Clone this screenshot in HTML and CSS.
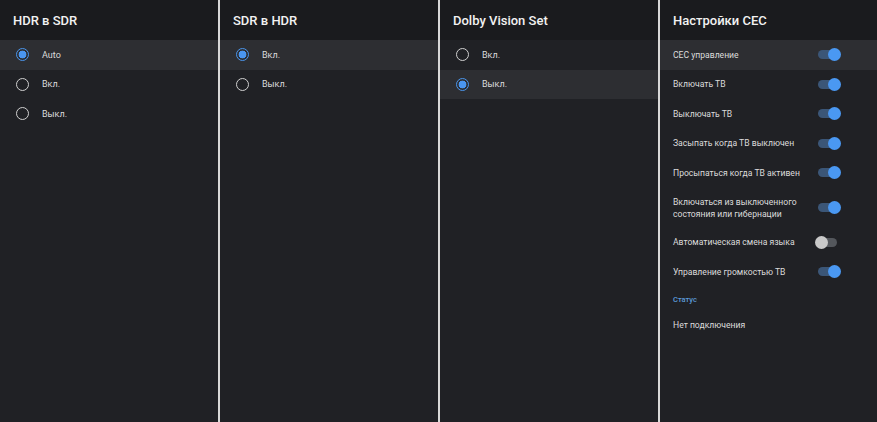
FILE: index.html
```html
<!DOCTYPE html>
<html lang="ru">
<head>
<meta charset="utf-8">
<link rel="stylesheet" href="styles.css">
</head>
<body>
<div class="screen">
  <section class="panel">
    <header class="title">HDR в SDR</header>
    <ul class="list">
      <li class="row active"><span class="radio on"></span><span class="label">Auto</span></li>
      <li class="row"><span class="radio"></span><span class="label">Вкл.</span></li>
      <li class="row"><span class="radio"></span><span class="label">Выкл.</span></li>
    </ul>
  </section>
  <section class="panel">
    <header class="title">SDR в HDR</header>
    <ul class="list">
      <li class="row active"><span class="radio on"></span><span class="label">Вкл.</span></li>
      <li class="row"><span class="radio"></span><span class="label">Выкл.</span></li>
    </ul>
  </section>
  <section class="panel">
    <header class="title">Dolby Vision Set</header>
    <ul class="list">
      <li class="row"><span class="radio"></span><span class="label">Вкл.</span></li>
      <li class="row active"><span class="radio on"></span><span class="label">Выкл.</span></li>
    </ul>
  </section>
  <section class="panel">
    <header class="title">Настройки CEC</header>
    <ul class="list">
      <li class="srow active"><span class="stext">CEC управление</span><span class="toggle on"></span></li>
      <li class="srow"><span class="stext">Включать ТВ</span><span class="toggle on"></span></li>
      <li class="srow"><span class="stext">Выключать ТВ</span><span class="toggle on"></span></li>
      <li class="srow"><span class="stext">Засыпать когда ТВ выключен</span><span class="toggle on"></span></li>
      <li class="srow"><span class="stext">Просыпаться когда ТВ активен</span><span class="toggle on"></span></li>
      <li class="srow tall"><span class="stext">Включаться из выключенного состояния или гибернации</span><span class="toggle on"></span></li>
      <li class="srow"><span class="stext">Автоматическая смена языка</span><span class="toggle"></span></li>
      <li class="srow"><span class="stext">Управление громкостью ТВ</span><span class="toggle on"></span></li>
      <li class="section">Статус</li>
      <li class="srow"><span class="stext">Нет подключения</span></li>
    </ul>
  </section>
</div>
</body>
</html>
```

FILE: styles.css
```css
* { box-sizing: border-box; }
html, body { margin: 0; padding: 0; }
body {
  width: 877px;
  height: 422px;
  overflow: hidden;
  background: #202125;
  font-family: Roboto, "Noto Sans", sans-serif;
}
.screen {
  display: grid;
  grid-template-columns: 218px 218px 218px 217px;
  column-gap: 2px;
  height: 422px;
  background: #d8d8d8;
}
.panel {
  background: #202125;
  height: 100%;
  overflow: hidden;
}
.title {
  height: 40px;
  background: #1a1b1e;
  color: #f2f2f2;
  font-size: 13px;
  font-weight: 500;
  display: flex;
  align-items: center;
  padding: 1px 13px 0;
}
.list { list-style: none; margin: 0; padding: 0; }
.row {
  height: 29.5px;
  display: flex;
  align-items: center;
  padding-left: 16px;
}
.row.active, .srow.active { background: #2d2e32; }
.radio {
  width: 13px;
  height: 13px;
  border-radius: 50%;
  border: 1.5px solid #d0d0d0;
  flex: none;
}
.radio.on {
  border-color: #4b95ea;
  background: radial-gradient(circle, #4a96f0 0 3.6px, transparent 4.2px);
}
.label {
  color: #dcdcdc;
  font-size: 9px;
  margin-left: 13px;
}
.srow {
  height: 29.5px;
  display: flex;
  align-items: center;
  justify-content: space-between;
  padding: 0 40px 0 13px;
}
.srow.tall { height: 40px; }
.stext {
  color: #dcdcdc;
  font-size: 8.6px;
  line-height: 12px;
  max-width: 128px;
}
.toggle {
  position: relative;
  width: 19px;
  height: 9px;
  border-radius: 5px;
  background: #54575c;
  flex: none;
}
.toggle::after {
  content: "";
  position: absolute;
  top: -2px;
  left: -3px;
  width: 13px;
  height: 13px;
  border-radius: 50%;
  background: #c9c9c9;
}
.toggle.on { background: #3b5677; }
.toggle.on::after { left: 10px; background: #4a98f2; }
.section {
  height: 24px;
  display: flex;
  align-items: center;
  padding: 2px 13px 0;
  color: #5b9ad8;
  font-size: 7.5px;
  font-weight: 500;
}
```
